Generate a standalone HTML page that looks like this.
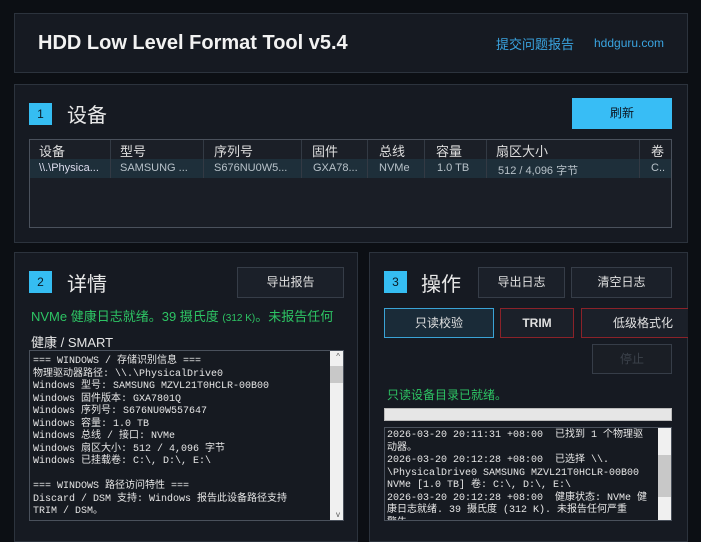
<!DOCTYPE html>
<html><head><meta charset="utf-8"><style>
*{box-sizing:border-box;margin:0;padding:0}
body{width:701px;height:526px;background:#0c0f14;overflow:hidden;position:relative;font-family:"Liberation Sans","Noto Sans CJK SC",sans-serif;color:#e6e8eb}
.p{position:absolute;background:#161a22;border:1px solid #2c333d}
.a{position:absolute}
.badge{position:absolute;width:23px;height:22px;background:#35bdf2;color:#0a1a24;font-size:12px;text-align:center;line-height:22px}
.h{position:absolute;font-size:20px;color:#e8e8e8}
.btn{position:absolute;border:1px solid #363d48;background:#1b2029;color:#e0e0e0;font-size:12px;text-align:center}
.mono{font-family:"Liberation Mono","Noto Sans CJK SC",monospace;font-size:10px;line-height:12.5px;color:#e6e6e6;white-space:pre}
.sb{position:absolute;width:13px;background:#f0f0f0}
</style></head><body>
<div class="p" style="left:14px;top:13px;width:674px;height:60px"></div>
<div class="a" style="left:38px;top:32px;font-size:20px;font-weight:bold;color:#f2f2f2">HDD Low Level Format Tool v5.4</div>
<div class="a" style="left:496px;top:34px;font-size:13px;color:#3aa4e0">提交问题报告</div>
<div class="a" style="left:594px;top:36px;font-size:12px;color:#3aa4e0">hddguru.com</div>

<div class="p" style="left:14px;top:84px;width:674px;height:159px"></div>
<div class="badge" style="left:29px;top:103px">1</div>
<div class="h" style="left:67px;top:99px">设备</div>
<div class="a" style="left:572px;top:98px;width:100px;height:31px;background:#38bdf5;color:#0b1520;font-size:12px;text-align:center;line-height:31px">刷新</div>
<div class="a" style="left:29px;top:139px;width:643px;height:89px;border:1px solid #4a515c;background:#1a1e26;overflow:hidden">
<div style="height:19px;background:#1b1f27;font-size:13px;color:#ddd;position:relative">
<span class="a" style="left:9px;top:1px">设备</span><span class="a" style="left:90px;top:1px">型号</span><span class="a" style="left:184px;top:1px">序列号</span><span class="a" style="left:282px;top:1px">固件</span><span class="a" style="left:349px;top:1px">总线</span><span class="a" style="left:406px;top:1px">容量</span><span class="a" style="left:466px;top:1px">扇区大小</span><span class="a" style="left:621px;top:1px">卷</span>
</div>
<div style="height:19px;background:#1e2f3a;font-size:11px;color:#b8c2c9;position:relative">
<span class="a" style="left:9px;top:3px;color:#dde">\\.\Physica...</span><span class="a" style="left:90px;top:3px">SAMSUNG ...</span><span class="a" style="left:184px;top:3px">S676NU0W5...</span><span class="a" style="left:283px;top:3px">GXA78...</span><span class="a" style="left:349px;top:3px">NVMe</span><span class="a" style="left:407px;top:3px">1.0 TB</span><span class="a" style="left:468px;top:3px">512 / 4,096 字节</span><span class="a" style="left:621px;top:3px">C..</span>
</div>
<div class="a" style="left:80px;top:0;width:1px;height:38px;background:#333a44"></div>
<div class="a" style="left:173px;top:0;width:1px;height:38px;background:#333a44"></div>
<div class="a" style="left:271px;top:0;width:1px;height:38px;background:#333a44"></div>
<div class="a" style="left:337px;top:0;width:1px;height:38px;background:#333a44"></div>
<div class="a" style="left:394px;top:0;width:1px;height:38px;background:#333a44"></div>
<div class="a" style="left:456px;top:0;width:1px;height:38px;background:#333a44"></div>
<div class="a" style="left:609px;top:0;width:1px;height:38px;background:#333a44"></div>
</div>

<div class="p" style="left:14px;top:252px;width:344px;height:290px"></div>
<div class="badge" style="left:29px;top:271px">2</div>
<div class="h" style="left:67px;top:268px">详情</div>
<div class="btn" style="left:237px;top:267px;width:107px;height:31px;line-height:29px">导出报告</div>
<div class="a" style="left:31px;top:306px;font-size:13px;color:#2dc464;white-space:nowrap">NVMe 健康日志就绪。39 摄氏度 <span style="font-size:10px">(312 K)</span>。未报告任何</div>
<div class="a" style="left:31px;top:332px;font-size:13px;color:#e6e6e6">健康 / SMART</div>
<div class="a" style="left:29px;top:350px;width:315px;height:171px;border:1px solid #4a515c;background:#161a21;overflow:hidden">
<div class="mono" style="position:absolute;left:3px;top:5px;line-height:12.5px">=== WINDOWS / 存储识别信息 ===
物理驱动器路径: \\.\PhysicalDrive0
Windows 型号: SAMSUNG MZVL21T0HCLR-00B00
Windows 固件版本: GXA7801Q
Windows 序列号: S676NU0W557647
Windows 容量: 1.0 TB
Windows 总线 / 接口: NVMe
Windows 扇区大小: 512 / 4,096 字节
Windows 已挂载卷: C:\, D:\, E:\

=== WINDOWS 路径访问特性 ===
Discard / DSM 支持: Windows 报告此设备路径支持
TRIM / DSM。</div>
<div class="sb" style="right:0;top:0;height:169px"></div>
<div class="a" style="right:0;top:15px;width:13px;height:17px;background:#c8c8c8"></div>
<div class="a" style="right:3px;top:1px;font-size:8px;color:#555">^</div>
<div class="a" style="right:3px;bottom:1px;font-size:8px;color:#555">v</div>
</div>

<div class="p" style="left:369px;top:252px;width:319px;height:290px"></div>
<div class="badge" style="left:384px;top:271px">3</div>
<div class="h" style="left:421px;top:268px">操作</div>
<div class="btn" style="left:478px;top:267px;width:87px;height:31px;line-height:29px">导出日志</div>
<div class="btn" style="left:571px;top:267px;width:101px;height:31px;line-height:29px">清空日志</div>
<div class="btn" style="left:384px;top:308px;width:110px;height:30px;line-height:28px;border-color:#3aa3d6;background:#1a2b38">只读校验</div>
<div class="btn" style="left:500px;top:308px;width:74px;height:30px;line-height:28px;border-color:#8b2229;font-weight:bold">TRIM</div>
<div class="btn" style="left:581px;top:308px;width:107px;height:30px;line-height:28px;border-color:#8b2229;border-right:none;text-align:left;padding-left:31px">低级格式化</div>
<div class="btn" style="left:592px;top:344px;width:80px;height:30px;line-height:28px;color:#3c424b;background:#1a1e25">停止</div>
<div class="a" style="left:387px;top:386px;font-size:12px;color:#2dc464">只读设备目录已就绪。</div>
<div class="a" style="left:384px;top:408px;width:288px;height:13px;background:#e6e6e6;border:1px solid #bbb"></div>
<div class="a" style="left:384px;top:427px;width:288px;height:94px;border:1px solid #4a515c;background:#161a21;overflow:hidden">
<div class="mono" style="position:absolute;left:2px;top:2px">2026-03-20 20:11:31 +08:00  已找到 1 个物理驱
动器。
2026-03-20 20:12:28 +08:00  已选择 \\.
\PhysicalDrive0 SAMSUNG MZVL21T0HCLR-00B00
NVMe [1.0 TB] 卷: C:\, D:\, E:\
2026-03-20 20:12:28 +08:00  健康状态: NVMe 健
康日志就绪. 39 摄氏度 (312 K). 未报告任何严重
警告</div>
<div class="sb" style="right:0;top:0;height:92px"></div>
<div class="a" style="right:0;top:27px;width:13px;height:42px;background:#c8c8c8"></div>
</div>
</body></html>
